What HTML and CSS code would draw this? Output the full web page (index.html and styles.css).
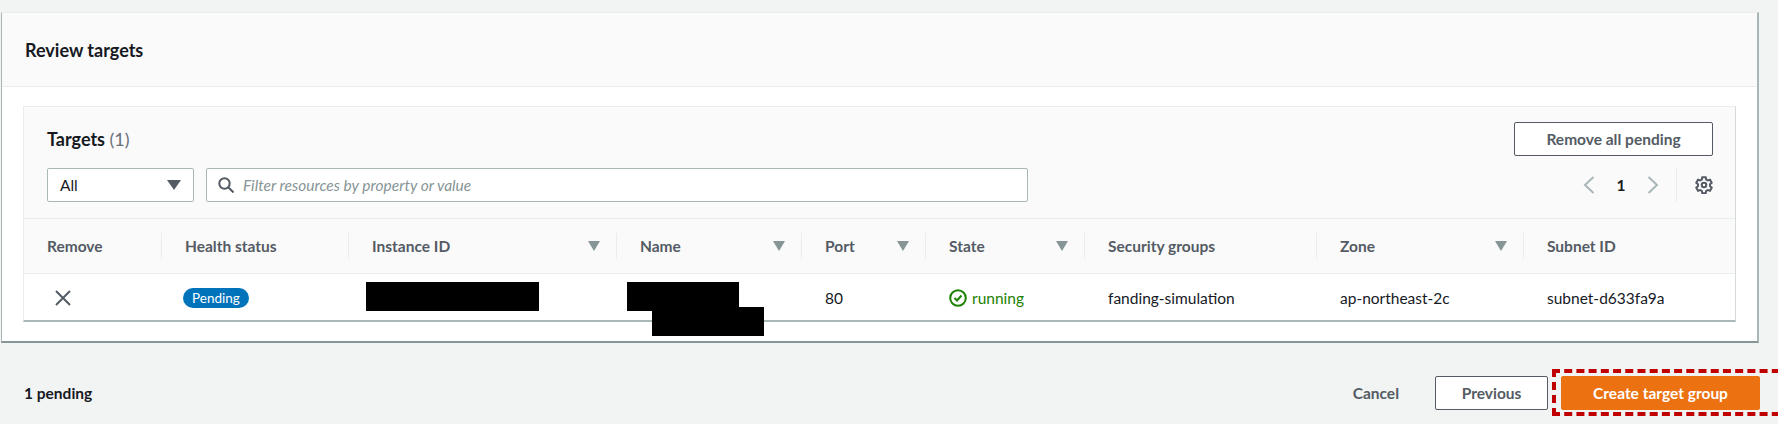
FILE: index.html
```html
<!DOCTYPE html>
<html lang="en">
<head>
    <meta charset="UTF-8">
    <title>Review targets</title>
    <link rel="stylesheet" href="styles.css">
</head>
<body>
    <div class="page">
        <section class="card">
            <h2 class="card-title">Review targets</h2>
            <div class="card-body">
                <div class="targets">
                    <div class="targets-head">
                        <div class="targets-top">
                            <h3 class="targets-title">Targets <span class="count">(1)</span></h3>
                            <button class="btn">Remove all pending</button>
                        </div>
                        <div class="targets-tools">
                            <div class="select">
                                <span>All</span>
                                <svg width="14" height="10" viewBox="0 0 14 10"><path d="M0 0h14L7 10z" fill="#545b64"/></svg>
                            </div>
                            <div class="filter">
                                <svg width="16" height="16" viewBox="0 0 16 16" fill="none" stroke="#545b64" stroke-width="2"><circle cx="6.5" cy="6.5" r="5.2"/><path d="M10.5 10.5l5 5"/></svg>
                                <span>Filter resources by property or value</span>
                            </div>
                            <div class="pager">
                                <svg width="12" height="18" viewBox="0 0 12 18" fill="none" stroke="#aab7b8" stroke-width="2"><path d="M10.5 1L2 9l8.5 8"/></svg>
                                <span class="page-num">1</span>
                                <svg width="12" height="18" viewBox="0 0 12 18" fill="none" stroke="#aab7b8" stroke-width="2"><path d="M1.5 1L10 9l-8.5 8"/></svg>
                                <span class="pager-sep"></span>
                                <svg width="18" height="18" viewBox="0 0 18 18" fill="none" stroke="#545b64" stroke-width="2"><path d="M7.3 1.2h3.4l.5 2.3 1.6.9 2.2-.7 1.7 3-1.7 1.6v1.8l1.7 1.6-1.7 3-2.2-.7-1.6.9-.5 2.3H7.3l-.5-2.3-1.6-.9-2.2.7-1.7-3 1.7-1.6V8.300L1.300 6.700l1.700-3 2.200.7 1.600-.9z"/><circle cx="9" cy="9" r="2.300"/></svg>
                            </div>
                        </div>
                    </div>
                    <div class="row row-head">
                        <div class="cell"><span>Remove</span></div>
                        <div class="cell"><span>Health status</span></div>
                        <div class="cell"><span>Instance ID</span><i class="sort"></i></div>
                        <div class="cell"><span>Name</span><i class="sort"></i></div>
                        <div class="cell"><span>Port</span><i class="sort"></i></div>
                        <div class="cell"><span>State</span><i class="sort"></i></div>
                        <div class="cell"><span>Security groups</span></div>
                        <div class="cell"><span>Zone</span><i class="sort"></i></div>
                        <div class="cell"><span>Subnet ID</span></div>
                    </div>
                    <div class="row row-body">
                        <div class="cell">
                            <svg width="16" height="16" viewBox="0 0 16 16" fill="none" stroke="#545b64" stroke-width="2"><path d="M1 1l14 14M15 1L1 15"/></svg>
                        </div>
                        <div class="cell"><span class="badge">Pending</span></div>
                        <div class="cell"></div>
                        <div class="cell"></div>
                        <div class="cell">80</div>
                        <div class="cell state">
                            <svg width="18" height="18" viewBox="0 0 18 18" fill="none" stroke="#1d8102" stroke-width="2"><circle cx="9" cy="9" r="7.800"/><path d="M5.500 9l2.500 2.500 4.500-5"/></svg>
                            <span>running</span>
                        </div>
                        <div class="cell">fanding-simulation</div>
                        <div class="cell">ap-northeast-2c</div>
                        <div class="cell">subnet-d633fa9a</div>
                    </div>
                </div>
            </div>
        </section>
        <footer class="footer">
            <span class="pending">1 pending</span>
            <div class="actions">
                <span class="cancel">Cancel</span>
                <button class="btn btn-prev">Previous</button>
                <button class="btn-primary">Create target group</button>
            </div>
        </footer>
    </div>

    <!-- masked areas and annotation drawn over the screenshot -->
    <div class="mask mask-id"></div>
    <div class="mask mask-name1"></div>
    <div class="mask mask-name2"></div>
    <div class="highlight"></div>
</body>
</html>
```

FILE: styles.css
```css
body {
    margin: 0;
    background-color: #f2f3f3;
    font-family: 'Lato', 'Noto Sans', sans-serif;
    font-size: 15.500px;
    color: #16191f;
    overflow: hidden;
}

.page {
    width: 1778px;
    height: 424px;
    padding: 12px 0 0 1px;
    box-sizing: border-box;
}

/* Outer card */
.card {
    width: 1758px;
    height: 331px;
    background: #fff;
    border-left: 1px solid #aab7b8;
    border-right: 2px solid #aab7b8;
    border-bottom: 2px solid #879596;
    border-top: 1px solid #eaeded;
    box-sizing: border-box;
}

.card-title {
    margin: 0;
    height: 73px;
    padding-left: 23px;
    display: flex;
    align-items: center;
    background: #fafafa;
    border-bottom: 1px solid #eaeded;
    font-size: 18px;
    font-weight: 700;
}

.card-body {
    padding: 19px 21px 0 21px;
}

/* Targets table */
.targets {
    height: 216px;
    background: #fff;
    border: 1px solid #eaeded;
    border-bottom: 2px solid #aab7b8;
    border-right: 1px solid #d5dbdb;
    box-sizing: border-box;
}

.targets-head {
    height: 112px;
    padding: 15px 22px 0 23px;
    background: #fafafa;
    border-bottom: 1px solid #eaeded;
    box-sizing: border-box;
}

.targets-top {
    display: flex;
    justify-content: space-between;
    align-items: center;
    height: 34px;
}

.targets-title {
    margin: 0;
    font-size: 18px;
    font-weight: 700;
}

.count {
    font-weight: 400;
    color: #687078;
}

.targets-tools {
    display: flex;
    align-items: center;
    margin-top: 12px;
}

.select {
    width: 147px;
    height: 34px;
    padding: 0 12px;
    display: flex;
    align-items: center;
    justify-content: space-between;
    background: #fff;
    border: 1px solid #aab7b8;
    border-radius: 2px;
    box-sizing: border-box;
}

.filter {
    width: 822px;
    height: 34px;
    margin-left: 12px;
    padding: 0 11px;
    display: flex;
    align-items: center;
    gap: 9px;
    background: #fff;
    border: 1px solid #aab7b8;
    border-radius: 2px;
    box-sizing: border-box;
    color: #879596;
    font-style: italic;
}

.pager {
    margin-left: auto;
    display: flex;
    align-items: center;
}

.page-num {
    width: 52px;
    text-align: center;
    font-weight: 700;
}

.pager-sep {
    width: 1px;
    height: 34px;
    margin: 0 18px 0 17px;
    background: #eaeded;
}

.btn {
    width: 199px;
    height: 34px;
    background: #fff;
    border: 1px solid #545b64;
    border-radius: 2px;
    font-family: inherit;
    font-size: 15.500px;
    font-weight: 700;
    color: #545b64;
    padding: 0;
}

.row {
    display: grid;
    grid-template-columns: 137px 187px 268px 185px 124px 159px 232px 207px 1fr;
}

.row-head {
    height: 55px;
    background: #fafafa;
    border-bottom: 1px solid #eaeded;
    box-sizing: border-box;
    color: #545b64;
    font-weight: 700;
}

.row-head .cell {
    height: 26px;
    margin-top: 14px;
    padding: 0 16px 0 23px;
    display: flex;
    align-items: center;
    justify-content: space-between;
    border-left: 1px solid #eaeded;
    box-sizing: border-box;
}

.row-head .cell:first-child {
    border-left: none;
}

.sort {
    width: 0;
    height: 0;
    border-left: 6px solid transparent;
    border-right: 6px solid transparent;
    border-top: 10px solid #879596;
}

.row-body {
    height: 47px;
    align-items: center;
}

.row-body .cell {
    padding-left: 24px;
    color: #16191f;
}

.row-body .cell:first-child {
    padding-left: 31px;
    display: flex;
}

.badge {
    display: inline-block;
    margin-left: -2px;
    padding: 2px 9px;
    background: #0073bb;
    border-radius: 12px;
    color: #fff;
    font-size: 13.500px;
}

.row-body .state {
    display: flex;
    align-items: center;
    gap: 5px;
    color: #1d8102;
}

/* Footer */
.footer {
    display: flex;
    justify-content: space-between;
    align-items: center;
    height: 34px;
    margin-top: 33px;
    padding-left: 23px;
}

.pending {
    font-weight: 700;
}

.actions {
    display: flex;
    align-items: center;
    margin-right: 18px;
}

.cancel {
    margin-right: 36px;
    font-weight: 700;
    color: #545b64;
}

.btn-prev {
    width: 113px;
    margin-right: 13px;
}

.btn-primary {
    width: 199px;
    height: 34px;
    padding: 0;
    background: #ec7211;
    border: 1px solid #ec7211;
    border-radius: 2px;
    font-family: inherit;
    font-size: 15.500px;
    font-weight: 700;
    color: #fff;
}

/* Overlays */
.mask {
    position: absolute;
    background: #000;
}

.mask-id {
    left: 366px;
    top: 282px;
    width: 173px;
    height: 29px;
}

.mask-name1 {
    left: 627px;
    top: 282px;
    width: 112px;
    height: 29px;
}

.mask-name2 {
    left: 652px;
    top: 307px;
    width: 112px;
    height: 29px;
}

.highlight {
    position: absolute;
    left: 1552px;
    top: 369px;
    width: 240px;
    height: 47px;
    border: 4px dashed #c00000;
    box-sizing: border-box;
}
```
